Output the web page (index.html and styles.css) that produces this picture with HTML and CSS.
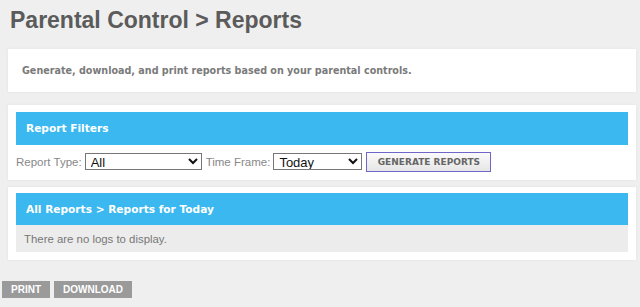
FILE: index.html
```html
<!DOCTYPE html>
<html lang="en">
<head>
    <meta charset="UTF-8" />
    <title>Parental Control &gt; Reports</title>
    <link rel="stylesheet" href="styles.css">
</head>
<body>

<h1 class="page-title">Parental Control &gt; Reports</h1>

<div class="panel intro">
    <p>Generate, download, and print reports based on your parental controls.</p>
</div>

<div class="panel">
    <div class="panel-head">Report Filters</div>
    <form class="filters">
        <label for="reportType">Report Type:</label>
        <select id="reportType" class="type-select">
            <option>All</option>
        </select>
        <label for="timeFrame">Time Frame:</label>
        <select id="timeFrame" class="time-select">
            <option>Today</option>
        </select>
        <button type="button" class="generate">GENERATE REPORTS</button>
    </form>
</div>

<div class="panel reports">
    <div class="panel-head">All Reports &gt; Reports for Today</div>
    <div class="empty">There are no logs to display.</div>
</div>

<div class="actions">
    <button type="button" class="action">PRINT</button>
    <button type="button" class="action">DOWNLOAD</button>
</div>

</body>
</html>
```

FILE: styles.css
```css
body {
    margin: 0;
    background-color: #efefef;
    font-family: 'Liberation Sans', Arial, sans-serif;
    color: #666;
}

.page-title {
    margin: 0;
    padding: 7px 10px 0;
    height: 43px;
    box-sizing: border-box;
    font-size: 23px;
    font-weight: bold;
    color: #5b5b5b;
}

.panel {
    background: white;
    margin: 6px 4px 7px 8px;
    padding: 7px 8px 8px;
    box-shadow: 0 0 3px rgba(0,0,0,0.06);
}

.intro {
    padding: 0 14px;
    height: 43px;
    display: flex;
    align-items: center;
    margin-bottom: 13px;
}

.intro p {
    margin: 0;
    font-family: 'DejaVu Sans', Verdana, sans-serif;
    font-size: 9.6px;
    font-weight: bold;
    color: #7a7a7a;
}

.panel-head {
    background-color: #3bb8ef;
    color: white;
    height: 33px;
    line-height: 33px;
    padding-left: 10px;
    font-family: 'DejaVu Sans', Verdana, sans-serif;
    font-size: 10.6px;
    font-weight: bold;
}

.filters {
    display: flex;
    align-items: center;
    height: 21px;
    padding-top: 6px;
    font-size: 11.5px;
    color: #888;
}

.filters label {
    margin-right: 3px;
}

.filters select {
    height: 17px;
    padding: 0 0 0 1px;
    border: 1px solid #767676;
    border-radius: 0;
    background: white;
    font-family: 'Liberation Sans', Arial, sans-serif;
    font-size: 13px;
    color: #111;
    margin-right: 4px;
}

.type-select {
    width: 117px;
}

.time-select {
    width: 89px;
}

.generate {
    height: 20px;
    width: 125px;
    border: 1px solid #6f66c9;
    background: linear-gradient(#fafafa, #e6e6e6);
    font-family: 'DejaVu Sans', Verdana, sans-serif;
    font-size: 9px;
    font-weight: bold;
    color: #666;
    padding: 0;
}

.reports {
    padding-top: 6px;
}

.reports .panel-head {
    height: 32px;
    line-height: 32px;
}

.empty {
    background-color: #ececec;
    height: 27px;
    line-height: 28px;
    padding-left: 8px;
    font-size: 11.4px;
    color: #777;
}

.actions {
    display: flex;
    gap: 4px;
    margin: 21px 0 0 2px;
}

.action {
    background-color: #9a9a9a;
    color: white;
    border: none;
    height: 17px;
    padding: 0 9px;
    font-family: 'Liberation Sans', Arial, sans-serif;
    font-size: 10px;
    font-weight: bold;
}
```
